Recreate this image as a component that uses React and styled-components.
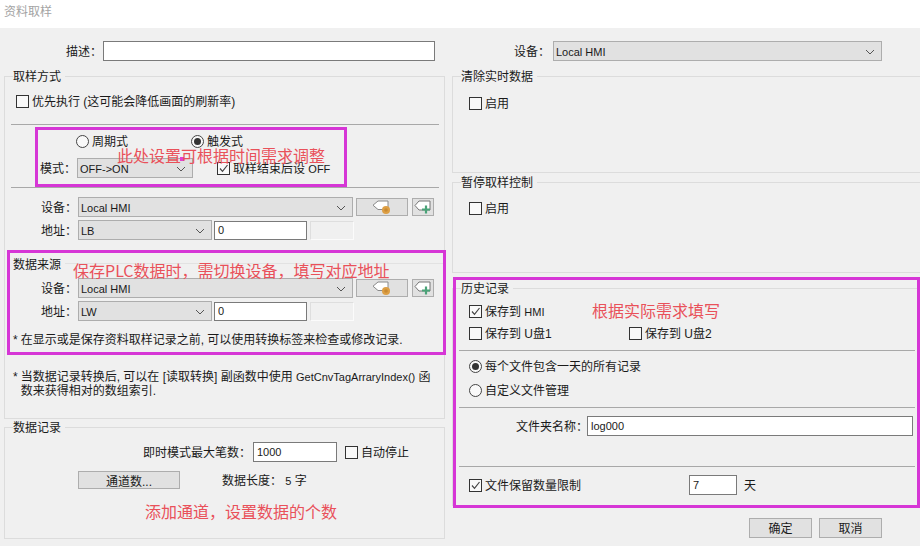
import React from "react";
import styled, { createGlobalStyle } from "styled-components";

const GlobalStyle = createGlobalStyle`
  html, body { margin: 0; padding: 0; background: #f0f0f0; }
  body { font-family: "Liberation Sans", "Noto Sans CJK SC", sans-serif; font-size: 12px; color: #1a1a1a; }
`;

const Page = styled.div`
  position: relative;
  width: 920px;
  height: 546px;
  overflow: hidden;
  background: #f0f0f0;
`;

const TitleBar = styled.div`
  height: 28px;
  padding-left: 4px;
  line-height: 24px;
  background: #fff;
  color: #a3a3a3;
`;

const Columns = styled.div`
  display: flex;
  gap: 7px;
  padding-left: 4px;
`;

const Column = styled.div`
  width: ${(p) => p.$w}px;
  padding-top: 13px;
`;

const Group = styled.section`
  box-sizing: border-box;
  height: ${(p) => p.$h}px;
  margin-top: ${(p) => p.$mt || 0}px;
  border: 1px solid #dcdcdc;
  border-right: ${(p) => (p.$open ? "none" : "1px solid #dcdcdc")};
`;

const Legend = styled.div`
  width: fit-content;
  height: 13px;
  margin: -7px 0 0 8px;
  line-height: 14px;
  background: #f0f0f0;
  padding-right: 4px;
`;

const SubLegend = styled.div`
  display: flex;
  align-items: center;
  gap: 4px;
  height: 14px;
  margin: ${(p) => p.$mt}px 0 ${(p) => p.$mb}px 8px;
  line-height: 14px;
  &::after {
    content: "";
    flex: 1;
    height: 1px;
    margin-bottom: 4px;
    background: #e2e2e2;
  }
`;

const Spacer = styled.div`
  height: ${(p) => p.$h}px;
`;

const Row = styled.div`
  display: flex;
  align-items: center;
  height: ${(p) => p.$h || 20}px;
  margin-top: ${(p) => p.$mt || 0}px;
  padding-left: ${(p) => p.$pl || 0}px;
`;

const Separator = styled.div`
  height: 1px;
  margin: ${(p) => p.$mt}px 5px 0 6px;
  background: #a8a8a8;
`;

const Label = styled.span`
  flex: none;
  width: ${(p) => p.$w}px;
  margin-left: ${(p) => p.$ml || 0}px;
  margin-right: ${(p) => p.$mr || 0}px;
  padding-bottom: 2px;
  white-space: nowrap;
`;

const Select = styled.div`
  box-sizing: border-box;
  flex: none;
  display: flex;
  align-items: center;
  justify-content: space-between;
  width: ${(p) => p.$w}px;
  height: 20px;
  padding: 1px 6px 0 2px;
  background: #e1e1e1;
  border: 1px solid #adadad;
  font-size: 11px;
`;

const TextField = styled.input`
  box-sizing: border-box;
  flex: none;
  width: ${(p) => p.$w}px;
  height: ${(p) => p.$h || 20}px;
  margin: ${(p) => p.$m || "0"};
  padding: 0 3px;
  background: #fff;
  border: 1px solid #7a7a7a;
  border-radius: 0;
  outline: none;
  font: 11px "Liberation Sans", sans-serif;
  color: #1a1a1a;
`;

const DisabledField = styled.div`
  box-sizing: border-box;
  flex: none;
  width: 44px;
  height: 19px;
  margin-left: 3px;
  border: 1px solid #fbfbfb;
  border-top-color: #dedede;
  border-left-color: #dedede;
`;

const TagButton = styled.button`
  box-sizing: border-box;
  flex: none;
  display: flex;
  align-items: center;
  justify-content: center;
  width: ${(p) => p.$w}px;
  height: 18px;
  margin-left: ${(p) => p.$ml}px;
  padding: 0;
  background: #e1e1e1;
  border: 1px solid #adadad;
`;

const PushButton = styled.button`
  box-sizing: border-box;
  flex: none;
  width: ${(p) => p.$w}px;
  height: ${(p) => p.$h}px;
  margin-left: ${(p) => p.$ml || 0}px;
  padding: 0 0 1px;
  background: #e1e1e1;
  border: 1px solid #adadad;
  font: inherit;
  color: #1a1a1a;
`;

const Choice = styled.label`
  display: flex;
  align-items: center;
  flex: none;
  gap: 3px;
  width: ${(p) => (p.$w ? `${p.$w}px` : "auto")};
  margin-left: ${(p) => p.$ml || 0}px;
  white-space: nowrap;
  & > span:last-child {
    padding-bottom: 2px;
  }
`;

const Box = styled.span`
  box-sizing: border-box;
  flex: none;
  display: flex;
  width: 13px;
  height: 13px;
  background: #f9f9f9;
  border: 1px solid #333;
`;

const Radio = styled.span`
  box-sizing: border-box;
  flex: none;
  display: flex;
  align-items: center;
  justify-content: center;
  width: 13px;
  height: 13px;
  background: #f9f9f9;
  border: 1px solid #444;
  border-radius: 50%;
  &::after {
    content: "";
    width: 7px;
    height: 7px;
    border-radius: 50%;
    background: ${(p) => (p.$on ? "#333" : "transparent")};
  }
`;

const Note = styled.div`
  display: flex;
  gap: 3px;
  margin: ${(p) => p.$mt}px 4px 0 8px;
  line-height: 14px;
  white-space: ${(p) => (p.$wrap ? "normal" : "nowrap")};
`;

const Small = styled.span`
  font-size: 11px;
`;

const Footer = styled.div`
  display: flex;
  justify-content: flex-end;
  height: 20px;
  margin-top: 12px;
  padding-right: 38px;
`;

const Frame = styled.div`
  position: absolute;
  box-sizing: border-box;
  left: ${(p) => p.$x}px;
  top: ${(p) => p.$y}px;
  width: ${(p) => p.$w}px;
  height: ${(p) => p.$h}px;
  border: 3px solid #d636d6;
  pointer-events: none;
`;

const Handle = styled.div`
  position: absolute;
  left: 180px;
  top: 157px;
  width: 4px;
  height: 4px;
  background: #e040d0;
`;

const Annotation = styled.div`
  position: absolute;
  left: ${(p) => p.$x}px;
  top: ${(p) => p.$y}px;
  font-family: "Noto Sans CJK SC", sans-serif;
  font-size: 16px;
  line-height: 20px;
  white-space: nowrap;
  color: #e9515a;
`;

const Chevron = () => (
  <svg width="10" height="6" viewBox="0 0 10 6" fill="none">
    <path d="M1 1l4 4 4-4" stroke="#555" strokeWidth="1" />
  </svg>
);

const Check = () => (
  <svg width="11" height="11" viewBox="0 0 11 11" fill="none">
    <path d="M2 5.5l2.5 2.8L9.5 2" stroke="#444" strokeWidth="1.2" />
  </svg>
);

const TagDot = () => (
  <svg width="20" height="15" viewBox="0 0 20 15">
    <path d="M6 1h10v8.5H6L1 5.2z" fill="#fff" stroke="#8a8a8a" />
    <circle cx="14" cy="10" r="4" fill="#dd9f45" />
    <circle cx="14" cy="10" r="1.8" fill="#c98a32" />
  </svg>
);

const TagPlus = () => (
  <svg width="18" height="15" viewBox="0 0 18 15">
    <path d="M5 1h11v9H5L1 5.5z" fill="#fff" stroke="#777" />
    <path d="M12 5.5v8M8 9.5h8" stroke="#4aa378" strokeWidth="2.2" />
  </svg>
);

function Check2({ on, w, ml, children }) {
  return (
    <Choice $w={w} $ml={ml}>
      <Box>{on ? <Check /> : null}</Box>
      <span>{children}</span>
    </Choice>
  );
}

function RadioItem({ on, w, ml, children }) {
  return (
    <Choice $w={w} $ml={ml}>
      <Radio $on={on} />
      <span>{children}</span>
    </Choice>
  );
}

function DropDown({ w, children }) {
  return (
    <Select $w={w}>
      <span>{children}</span>
      <Chevron />
    </Select>
  );
}

function DeviceRows({ address }) {
  return (
    <>
      <Row $pl={36}>
        <Label $w={36} $mr={1}>设备：</Label>
        <DropDown w={275}>Local HMI</DropDown>
        <TagButton $w={52} $ml={3}><TagDot /></TagButton>
        <TagButton $w={22} $ml={4}><TagPlus /></TagButton>
      </Row>
      <Row $pl={36} $mt={3}>
        <Label $w={36} $mr={1}>地址：</Label>
        <DropDown w={134}>{address}</DropDown>
        <TextField $w={93} $h={19} $m="0 0 0 2px" value="0" readOnly />
        <DisabledField />
      </Row>
    </>
  );
}

export default function App() {
  return (
    <Page>
      <GlobalStyle />
      <TitleBar>资料取样</TitleBar>
      <Columns>
        <Column $w={441}>
          <Row $pl={62}>
            <Label $w={36} $mr={1}>描述：</Label>
            <TextField $w={332} />
          </Row>
          <Group $h={343} $mt={15}>
            <Legend>取样方式</Legend>
            <Row $mt={8} $pl={11}>
              <Check2>优先执行 (这可能会降低画面的刷新率)</Check2>
            </Row>
            <Separator $mt={13} />
            <Row $mt={6} $pl={71}>
              <RadioItem w={115}>周期式</RadioItem>
              <RadioItem on>触发式</RadioItem>
            </Row>
            <Row $mt={7} $pl={35}>
              <Label $w={36} $mr={1}>模式：</Label>
              <DropDown w={116}>OFF-&gt;ON</DropDown>
              <Check2 on ml={24}>取样结束后设 <Small>OFF</Small></Check2>
            </Row>
            <Separator $mt={9} />
            <Spacer $h={9} />
            <DeviceRows address="LB" />
            <SubLegend $mt={18} $mb={6}>数据来源</SubLegend>
            <DeviceRows address="LW" />
            <Note $mt={12}>
              <span>*</span>
              <span>在显示或是保存资料取样记录之前, 可以使用转换标签来检查或修改记录.</span>
            </Note>
            <Note $mt={23} $wrap>
              <span>*</span>
              <span>当数据记录转换后, 可以在 [读取转换] 副函数中使用 <Small>GetCnvTagArraryIndex()</Small> 函数来获得相对的数组索引.</span>
            </Note>
          </Group>
          <Group $h={112} $mt={8}>
            <Legend>数据记录</Legend>
            <Row $mt={8} $pl={138}>
              <Label $w={108} $mr={2}>即时模式最大笔数：</Label>
              <TextField $w={84} value="1000" readOnly />
              <Check2 ml={8}>自动停止</Check2>
            </Row>
            <Row $mt={9} $h={18} $pl={73}>
              <PushButton $w={102} $h={18}>通道数...</PushButton>
              <Label $w={84} $ml={42}>数据长度： <Small>5</Small> 字</Label>
            </Row>
          </Group>
        </Column>
        <Column $w={468}>
          <Row $pl={62}>
            <Label $w={36} $mr={3}>设备：</Label>
            <DropDown w={329}>Local HMI</DropDown>
          </Row>
          <Group $h={97} $mt={15} $open>
            <Legend>清除实时数据</Legend>
            <Row $mt={10} $pl={16}>
              <Check2>启用</Check2>
            </Row>
          </Group>
          <Group $h={91} $mt={9} $open>
            <Legend>暂停取样控制</Legend>
            <Row $mt={9} $pl={16}>
              <Check2>启用</Check2>
            </Row>
          </Group>
          <Group $h={218} $mt={15} $open>
            <Legend>历史记录</Legend>
            <Row $mt={6} $pl={16}>
              <Check2 on>保存到 <Small>HMI</Small></Check2>
            </Row>
            <Row $mt={2} $pl={16}>
              <Check2 w={160}>保存到 U盘1</Check2>
              <Check2>保存到 U盘2</Check2>
            </Row>
            <Separator $mt={7} />
            <Row $mt={5} $pl={16}>
              <RadioItem on>每个文件包含一天的所有记录</RadioItem>
            </Row>
            <Row $mt={4} $pl={16}>
              <RadioItem>自定义文件管理</RadioItem>
            </Row>
            <Separator $mt={7} />
            <Row $mt={8} $pl={63}>
              <Label $w={71}>文件夹名称：</Label>
              <TextField $w={326} value="log000" readOnly />
            </Row>
            <Separator $mt={30} />
            <Row $mt={8} $pl={16}>
              <Check2 on w={220}>文件保留数量限制</Check2>
              <TextField $w={48} value="7" readOnly />
              <Label $w={12} $ml={7}>天</Label>
            </Row>
          </Group>
          <Footer>
            <PushButton $w={63} $h={20}>确定</PushButton>
            <PushButton $w={63} $h={20} $ml={7}>取消</PushButton>
          </Footer>
        </Column>
      </Columns>

      <Frame $x={35} $y={127} $w={312} $h={60} />
      <Frame $x={7} $y={250} $w={439} $h={105} />
      <Frame $x={453} $y={277} $w={467} $h={231} />
      <Handle />
      <Annotation $x={117} $y={145}>此处设置可根据时间需求调整</Annotation>
      <Annotation $x={73} $y={260}>保存PLC数据时，需切换设备，填写对应地址</Annotation>
      <Annotation $x={145} $y={501}>添加通道，设置数据的个数</Annotation>
      <Annotation $x={592} $y={300}>根据实际需求填写</Annotation>
    </Page>
  );
}
